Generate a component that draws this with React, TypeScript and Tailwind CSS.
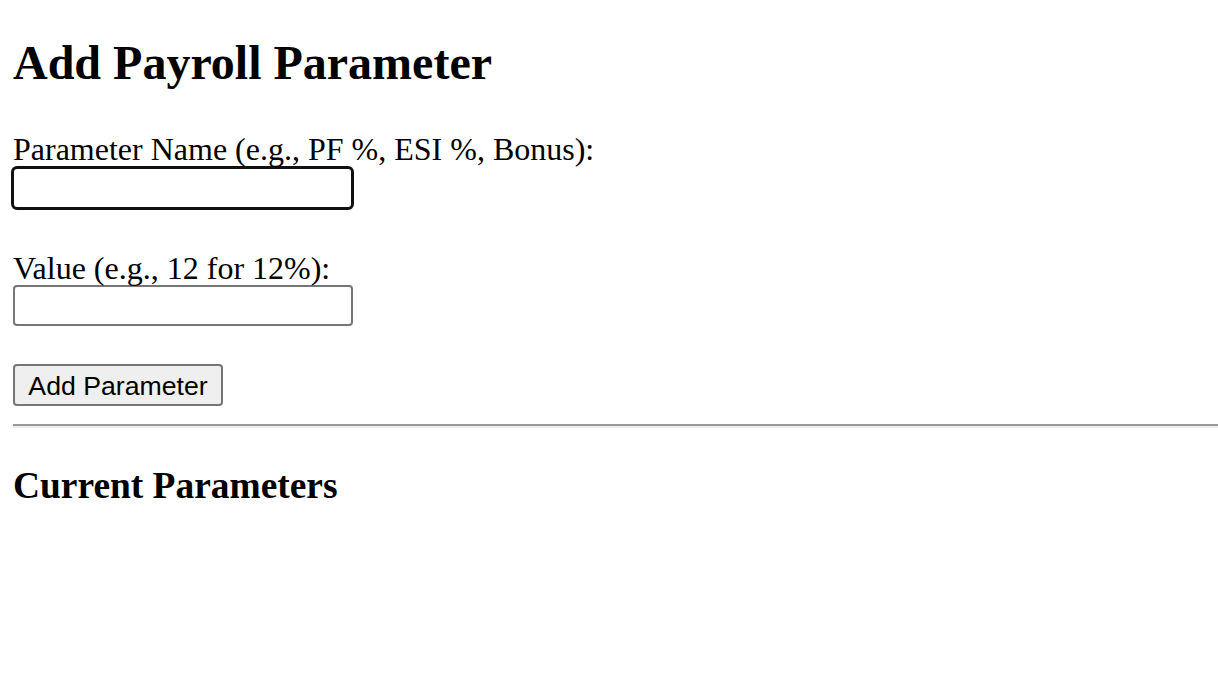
import React from 'react';

const serif = "font-['Liberation_Serif','Times_New_Roman',serif]";

const App = () => {
  return (
    <div className={`h-[680px] overflow-hidden bg-white text-black ${serif}`}>
      <section className="pl-[13px] pt-[35px]">
        <h1 className="text-[48px] leading-[55px] font-bold">Add Payroll Parameter</h1>

        <form onSubmit={(e) => e.preventDefault()}>
          <label htmlFor="param-name" className="mt-[44px] block text-[32px] leading-[30px]">
            Parameter Name (e.g., PF %, ESI %, Bonus):
          </label>
          <input
            id="param-name"
            type="text"
            className="-ml-[2px] mt-[2px] block h-[44px] w-[343px] rounded-[6px] border-[3px] border-[#101010] bg-white outline-none"
          />

          <label htmlFor="param-value" className="mt-[43px] block text-[32px] leading-[30px]">
            Value (e.g., 12 for 12%):
          </label>
          <input
            id="param-value"
            type="text"
            className="mt-[2px] block h-[41px] w-[340px] rounded-[4px] border-2 border-[#767676] bg-white outline-none"
          />

          <button
            type="submit"
            className="mt-[38px] block h-[42px] w-[210px] rounded-[4px] border-2 border-[#767676] bg-[#efefef] pt-[1px] font-['Liberation_Sans',Arial,sans-serif] text-[26.67px] leading-[30px] text-black"
          >
            Add Parameter
          </button>
        </form>

        <div className="mt-[18px] h-[4px] border-t-2 border-b-2 border-t-[#9a9a9a] border-b-[#eeeeee]" />

        <h3 className="mt-[36px] text-[37.44px] leading-[43px] font-bold">Current Parameters</h3>
      </section>
    </div>
  );
};

export default App;
